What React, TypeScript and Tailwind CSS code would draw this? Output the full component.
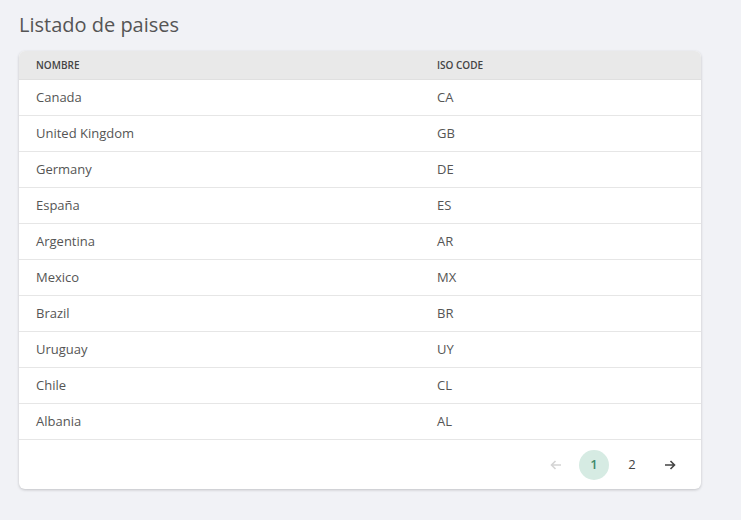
import React from "react";

const rows: [string, string][] = [
  ["Canada", "CA"], ["United Kingdom", "GB"], ["Germany", "DE"], ["España", "ES"],
  ["Argentina", "AR"], ["Mexico", "MX"], ["Brazil", "BR"], ["Uruguay", "UY"],
  ["Chile", "CL"], ["Albania", "AL"],
];

export default function App() {
  return (
    <div className="min-h-[520px] w-[741px] bg-[#f1f2f6] px-[19px] pt-[11px] text-[#4a4a4a]" style={{ fontFamily: "'Open Sans', Lato, sans-serif" }}>
      <h1 className="h-[28px] text-[20px] leading-[28px] text-[#555]">Listado de paises</h1>
      <div className="mt-[12px] w-[682px] overflow-hidden rounded-[6px] bg-white shadow-[0_1px_3px_rgba(0,0,0,0.2)]">
        <div className="flex h-[29px] items-center border-b border-[#e0e0e0] bg-[#e9e9e9] px-[17px] text-[10px] font-semibold text-[#444]">
          <div className="w-[401px]">NOMBRE</div>
          <div>ISO CODE</div>
        </div>
        {rows.map(([n, c]) => (
          <div key={c} className="flex h-[36px] items-center border-b border-[#e6e6e6] px-[17px] text-[13px] text-[#555]">
            <div className="w-[401px]">{n}</div>
            <div>{c}</div>
          </div>
        ))}
        <div className="flex h-[49px] items-center justify-end gap-[8px] pr-[16px]">
          <div className="flex h-[30px] w-[30px] items-center justify-center text-[#d4d4d4]">
            <svg width="12" height="12" viewBox="0 0 12 12" fill="none" stroke="currentColor" strokeWidth="1.6"><path d="M11 6H1.5M5.5 2L1.5 6l4 4" /></svg>
          </div>
          <div className="flex h-[30px] w-[30px] items-center justify-center rounded-full bg-[#d6ebe3] text-[13px] font-semibold text-[#3f8a6c]">1</div>
          <div className="flex h-[30px] w-[30px] items-center justify-center text-[13px] text-[#444]">2</div>
          <div className="flex h-[30px] w-[30px] items-center justify-center text-[#444]">
            <svg width="12" height="12" viewBox="0 0 12 12" fill="none" stroke="currentColor" strokeWidth="1.6"><path d="M1 6h9.5M6.5 2l4 4-4 4" /></svg>
          </div>
        </div>
      </div>
    </div>
  );
}
